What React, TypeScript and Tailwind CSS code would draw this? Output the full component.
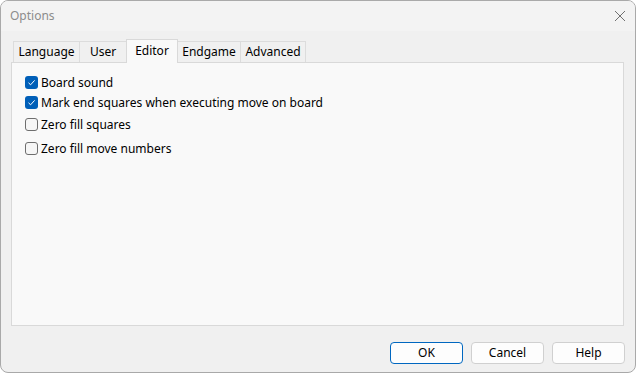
import React from 'react';

const font = { fontFamily: '"Segoe UI", "Noto Sans", "Open Sans", sans-serif' };

type Opt = { label: string; checked: boolean; gap: string };

const options: Opt[] = [
  { label: 'Board sound', checked: true, gap: 'mt-0' },
  { label: 'Mark end squares when executing move on board', checked: true, gap: 'mt-[7px]' },
  { label: 'Zero fill squares', checked: false, gap: 'mt-[9px]' },
  { label: 'Zero fill move numbers', checked: false, gap: 'mt-[11px]' },
];

const tabs = [
  { label: 'Language', w: 'w-[67px]' },
  { label: 'User', w: 'w-[48px]' },
  { label: 'Editor', w: 'w-[52px]' },
  { label: 'Endgame', w: 'w-[64px]' },
  { label: 'Advanced', w: 'w-[66px]' },
];

function CheckBox({ checked }: { checked: boolean }) {
  if (checked) {
    return (
      <div className="w-[13px] h-[13px] rounded-[3px] bg-[#005fb8] flex items-center justify-center shrink-0">
        <svg width="9" height="9" viewBox="0 0 9 9">
          <path d="M1.5 4.8 L3.6 6.8 L7.6 2.4" fill="none" stroke="#ffffff" strokeWidth="1" />
        </svg>
      </div>
    );
  }
  return <div className="w-[13px] h-[13px] rounded-[3px] border border-[#6e6e6e] bg-[#f6f6f6] shrink-0" />;
}

export default function App() {
  return (
    <div
      style={font}
      className="w-[636px] h-[373px] bg-[#f0f0f0] border border-[#a9a9a9] rounded-[8px] overflow-hidden flex flex-col text-[12px] text-black"
    >
      {/* Title bar */}
      <div className="h-[30px] bg-[#f3f3f3] flex items-center justify-between pl-[9px] pr-[9px] shrink-0">
        <span className="text-[12px] text-[#8c8c8c]">Options</span>
        <svg width="12" height="12" viewBox="0 0 12 12" className="mt-[-1px]">
          <path d="M1 1 L11 11 M11 1 L1 11" stroke="#707070" strokeWidth="1" />
        </svg>
      </div>

      {/* Body */}
      <div className="flex-1 flex flex-col px-[10px] pt-[8px]">
        {/* Tabs */}
        <div className="flex items-end pl-[2px] h-[23px] relative z-10">
          {tabs.map((t, i) => {
            const active = t.label === 'Editor';
            const ml = i === 0 ? 'ml-0' : '-ml-[1px]';
            return active ? (
              <div
                key={t.label}
                className={`${t.w} ${ml} h-[24px] mb-[-1px] bg-[#f9f9f9] border border-b-0 border-[#d9d9d9] flex justify-center pt-[2px] relative z-10`}
              >
                {t.label}
              </div>
            ) : (
              <div
                key={t.label}
                className={`${t.w} ${ml} h-[21px] bg-[#f0f0f0] border border-b-0 border-[#dcdcdc] flex items-center justify-center`}
              >
                {t.label}
              </div>
            );
          })}
        </div>

        {/* Panel */}
        <div className="h-[264px] w-[613px] bg-[#f9f9f9] border border-[#d9d9d9] pt-[13px] pl-[13px] flex flex-col">
          {options.map((o) => (
            <div key={o.label} className={`flex items-center h-[13px] ${o.gap}`}>
              <CheckBox checked={o.checked} />
              <span className="ml-[3px] leading-[13px]">{o.label}</span>
            </div>
          ))}
        </div>

        {/* Buttons */}
        <div className="flex justify-end gap-[8px] mt-[16px]">
          <button className="w-[73px] h-[22px] rounded-[4px] border border-[#0067c0] bg-[#fdfdfd] text-[12px]">OK</button>
          <button className="w-[73px] h-[22px] rounded-[4px] border border-[#d0d0d0] bg-[#fdfdfd] text-[12px]">Cancel</button>
          <button className="w-[73px] h-[22px] rounded-[4px] border border-[#d0d0d0] bg-[#fdfdfd] text-[12px]">Help</button>
        </div>
      </div>
    </div>
  );
}
